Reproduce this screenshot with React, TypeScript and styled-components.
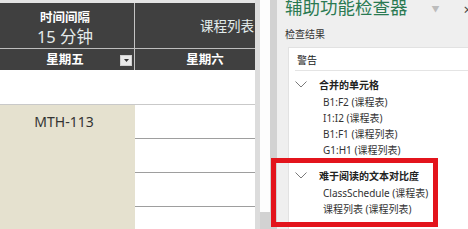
import styled, { createGlobalStyle } from "styled-components";

const GlobalStyle = createGlobalStyle`
  html, body {
    margin: 0;
    padding: 0;
    width: 468px;
    height: 229px;
    overflow: hidden;
    background: #fff;
    font-family: "Noto Sans", "Noto Sans CJK SC", sans-serif;
  }
`;

const Screen = styled.div`
  position: relative;
  display: flex;
  width: 468px;
  height: 229px;
  overflow: hidden;
`;

// ---- spreadsheet ----
const Sheet = styled.div`
  width: 255px;
  display: grid;
  grid-template-columns: 135px 120px;
  grid-template-rows: 3px 45px 22px 35px repeat(4, 34px);
  background: #fff;
`;

const TopStrip = styled.div`
  grid-column: 1 / 3;
  background: #e4e4e4;
`;

const HeadCell = styled.div<{ $divider?: boolean; $topLine?: boolean }>`
  background: #404040;
  color: #fff;
  box-sizing: border-box;
  border-right: ${(p) => (p.$divider ? "1px solid #c4c4c4" : "none")};
  border-top: ${(p) => (p.$topLine ? "1px solid #bdbdbd" : "none")};
`;

const IntervalCell = styled(HeadCell)`
  display: flex;
  flex-direction: column;
  align-items: center;
  padding-top: 6px;
  padding-right: 4px;
`;

const IntervalLabel = styled.div`
  font-size: 12.5px;
  font-weight: 700;
  line-height: 17px;
`;

const IntervalValue = styled.div`
  font-size: 16.5px;
  line-height: 21px;
  color: #e4eaea;
`;

const TitleCell = styled(HeadCell)`
  display: flex;
  align-items: center;
  justify-content: flex-end;
  padding-right: 1px;
  padding-bottom: 2px;
  font-size: 13.5px;
  color: #e2ecec;
`;

const DayCell = styled(HeadCell)<{ $padLeft: number }>`
  display: grid;
  grid-template-columns: 1fr auto;
  align-items: center;
  padding-left: ${(p) => p.$padLeft}px;
  padding-right: 2px;
  font-size: 12.5px;
  font-weight: 700;
  text-align: center;
  line-height: 21px;
`;

const FilterButton = styled.div`
  width: 12px;
  height: 11px;
  margin-top: 1px;
  background: #e9e9e9;
  border: 1px solid #cfcfcf;
  box-sizing: border-box;
  display: flex;
  align-items: center;
  justify-content: center;
`;

const BlankRow = styled.div`
  grid-column: 1 / 3;
  border-bottom: 1px solid #c9c9c9;
`;

const CourseCell = styled.div`
  grid-row: 5 / 9;
  background: #e5e1cf;
  border-right: 1px solid #e5e1cf;
  box-sizing: border-box;
  padding-top: 9px;
  padding-right: 6px;
  text-align: center;
  font-size: 14px;
  line-height: 16px;
  color: #333;
`;

const EmptyCell = styled.div`
  box-sizing: border-box;
  border-bottom: 1px solid #9e9e9e;
`;

// ---- scrollbar gutter ----
const Gutter = styled.div`
  width: 22px;
  display: flex;
  background: #d2d2d2;
`;

const GutterEdge = styled.div`
  width: 5px;
  background: #dcdcdc;
`;

const ScrollTrack = styled.div`
  width: 10px;
  height: 212px;
  background: #fdfdfd;
`;

// ---- accessibility pane ----
const Pane = styled.div`
  flex: 1;
  display: flex;
  flex-direction: column;
  background: #efefef;
  padding-left: 8px;
`;

const PaneHeader = styled.div`
  height: 22px;
  margin-top: -4px;
  display: flex;
  align-items: center;
`;

const PaneTitle = styled.div`
  font-size: 17.5px;
  line-height: 22px;
  color: #2a7a52;
  flex: 1;
`;

const PaneCaret = styled.span`
  font-size: 8px;
  color: #bcbcbc;
  margin-right: 24px;
  margin-top: 2px;
`;

const PaneClose = styled.span`
  font-size: 15px;
  line-height: 18px;
  color: #4a4a4a;
  margin-right: -4px;
  margin-top: 4px;
`;

const SectionLabel = styled.div`
  margin-top: 9px;
  font-size: 10px;
  line-height: 14px;
  color: #333;
`;

const ResultsBox = styled.div`
  flex: 1;
  margin-top: 6px;
  margin-left: 3px;
  background: #fff;
  border-top: 1px solid #e2e2e2;
  border-left: 1px solid #e2e2e2;
`;

const WarningHeader = styled.div`
  height: 22px;
  margin-left: 6px;
  padding-left: 2px;
  display: flex;
  align-items: center;
  border-bottom: 1px solid #e4e4e4;
  font-size: 10px;
  color: #222;
`;

const GroupList = styled.div`
  padding-top: 5px;
`;

const Group = styled.div`
  & + & {
    margin-top: 9px;
  }
`;

const GroupHeader = styled.div`
  height: 16px;
  margin-bottom: 2px;
  display: flex;
  align-items: center;
  padding-left: 6px;
  gap: 12px;
  font-size: 10px;
  font-weight: 700;
  color: #222;
`;

const Item = styled.div`
  height: 16px;
  line-height: 16px;
  padding-left: 34px;
  font-size: 10px;
  color: #333;
  white-space: nowrap;
`;

const Highlight = styled.div`
  position: absolute;
  left: 271px;
  top: 158px;
  width: 167px;
  height: 69px;
  box-sizing: border-box;
  border: 5px solid #e3141c;
`;

const Chevron = () => (
  <svg width="12" height="7" viewBox="0 0 12 7">
    <polyline points="0.5,0.5 6,6 11.5,0.5" fill="none" stroke="#7a7a7a" strokeWidth="1" />
  </svg>
);

const groups = [
  {
    title: "合并的单元格",
    items: ["B1:F2 (课程表)", "I1:I2 (课程表)", "B1:F1 (课程列表)", "G1:H1 (课程列表)"],
  },
  {
    title: "难于阅读的文本对比度",
    items: ["ClassSchedule (课程表)", "课程列表 (课程列表)"],
  },
];

const App = () => {
  return (
    <Screen>
      <GlobalStyle />
      <Sheet>
        <TopStrip />
        <IntervalCell $divider>
          <IntervalLabel>时间间隔</IntervalLabel>
          <IntervalValue>15 分钟</IntervalValue>
        </IntervalCell>
        <TitleCell>课程列表</TitleCell>
        <DayCell $divider $topLine $padLeft={10}>
          <span>星期五</span>
          <FilterButton>
            <svg width="5" height="3" viewBox="0 0 5 3">
              <polygon points="0,0 5,0 2.5,3" fill="#333" />
            </svg>
          </FilterButton>
        </DayCell>
        <DayCell $topLine $padLeft={22}>
          <span>星期六</span>
          <span />
        </DayCell>
        <BlankRow />
        <CourseCell>MTH-113</CourseCell>
        <EmptyCell />
        <EmptyCell />
        <EmptyCell />
        <EmptyCell />
      </Sheet>

      <Gutter>
        <GutterEdge />
        <ScrollTrack />
      </Gutter>

      <Pane>
        <PaneHeader>
          <PaneTitle>辅助功能检查器</PaneTitle>
          <PaneCaret>▼</PaneCaret>
          <PaneClose>×</PaneClose>
        </PaneHeader>
        <SectionLabel>检查结果</SectionLabel>
        <ResultsBox>
          <WarningHeader>警告</WarningHeader>
          <GroupList>
            {groups.map((g) => (
              <Group key={g.title}>
                <GroupHeader>
                  <Chevron />
                  <span>{g.title}</span>
                </GroupHeader>
                {g.items.map((it) => (
                  <Item key={it}>{it}</Item>
                ))}
              </Group>
            ))}
          </GroupList>
        </ResultsBox>
      </Pane>

      <Highlight />
    </Screen>
  );
};

export default App;
